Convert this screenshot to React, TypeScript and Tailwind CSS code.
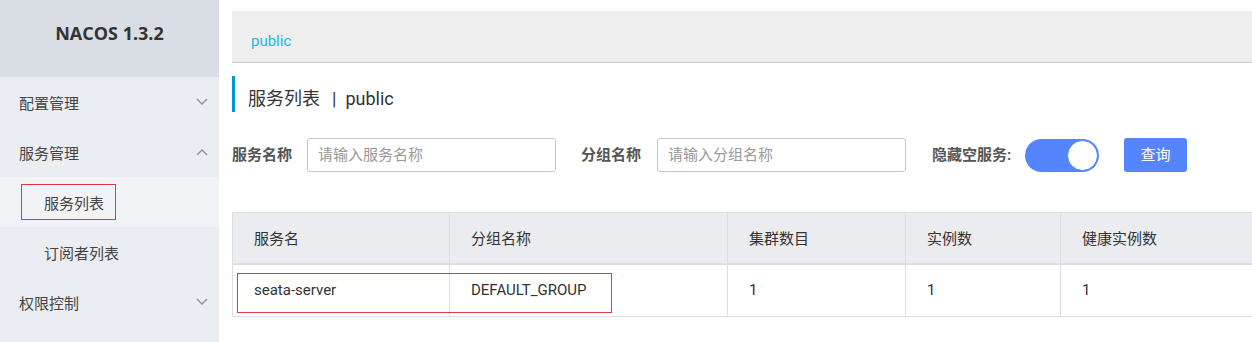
const font = { fontFamily: 'Roboto, "Noto Sans CJK SC", sans-serif' }

function Chevron({ up }: { up?: boolean }) {
  return (
    <svg width="12" height="8" viewBox="0 0 12 8" className="text-[#8a8f99]">
      <polyline
        points={up ? '1,7 6,2 11,7' : '1,1 6,6 11,1'}
        fill="none"
        stroke="currentColor"
        strokeWidth="1.3"
      />
    </svg>
  )
}

function MenuItem({ label, open }: { label: string; open?: boolean }) {
  return (
    <div className="flex h-[50px] items-center justify-between pl-[19px] pr-[11px] text-[15px] text-[#444]">
      <span className="pt-[5px]">{label}</span>
      <Chevron up={open} />
    </div>
  )
}

function SubItem({ label, active }: { label: string; active?: boolean }) {
  return (
    <div
      className={`relative flex h-[50px] items-center pl-[44px] text-[15px] text-[#444] ${
        active ? 'bg-[#f2f3f7]' : ''
      }`}
    >
      <span className="pt-[5px]">{label}</span>
      {active && (
        <div className="absolute left-[21px] top-[7px] h-[36px] w-[95px] border border-[#e4393c]" />
      )}
    </div>
  )
}

export default function App() {
  const cols = [
    { title: '服务名', value: 'seata-server', w: 'w-[217px]' },
    { title: '分组名称', value: 'DEFAULT_GROUP', w: 'w-[278px]' },
    { title: '集群数目', value: '1', w: 'w-[178px]' },
    { title: '实例数', value: '1', w: 'w-[155px]' },
    { title: '健康实例数', value: '1', w: 'w-[220px]' },
  ]

  return (
    <div className="flex h-[342px] w-[1252px] overflow-hidden bg-white" style={font}>
      {/* Sidebar */}
      <aside className="h-full w-[219px] shrink-0 bg-[#eaedf1]">
        <div
          className="flex h-[77px] items-center justify-center bg-[#d9dde4] pb-[10px] text-[18px] font-bold text-[#333]"
          style={{ fontFamily: '"Open Sans", sans-serif' }}
        >
          NACOS 1.3.2
        </div>
        <MenuItem label="配置管理" />
        <MenuItem label="服务管理" open />
        <SubItem label="服务列表" active />
        <SubItem label="订阅者列表" />
        <MenuItem label="权限控制" />
      </aside>

      {/* Main */}
      <main className="min-w-0 flex-1 overflow-hidden pl-[13px]">
        <div className="mt-[11px] h-[52px] w-[1100px] border-b border-[#cccccc] bg-[#eeeeee] pl-[19px] pt-[20px] text-[15px] leading-[20px] text-[#23b7e5]">
          public
        </div>

        <div className="mt-[13px] flex h-[36px] items-end border-l-[3px] border-[#0099cc] pb-[1px] pl-[13px] text-[18px] leading-[24px] text-[#333]">
          <span>服务列表</span>
          <span className="ml-[12px] mr-[9px]">|</span>
          <span>public</span>
        </div>

        <div className="mt-[26px] flex h-[34px] items-center text-[15px]">
          <span className="w-[75px] font-bold text-[#555]">服务名称</span>
          <div className="flex h-[34px] w-[249px] items-center rounded-[3px] border border-[#c4c6cf] pl-[10px] text-[#999]">
            请输入服务名称
          </div>
          <span className="ml-[25px] w-[76px] font-bold text-[#555]">分组名称</span>
          <div className="flex h-[34px] w-[249px] items-center rounded-[3px] border border-[#c4c6cf] pl-[10px] text-[#999]">
            请输入分组名称
          </div>
          <span className="ml-[26px] w-[93px] font-bold text-[#555]">隐藏空服务:</span>
          <div className="flex h-[33px] w-[74px] items-center justify-end rounded-full bg-[#5584ff] pr-[1px]">
            <div className="h-[31px] w-[31px] rounded-full border border-[#5584ff] bg-white" />
          </div>
          <button className="ml-[25px] h-[34px] w-[63px] rounded-[3px] bg-[#5584ff] text-[15px] text-white">
            查询
          </button>
        </div>

        <div className="relative mt-[40px] w-[1060px]">
          <div className="flex h-[53px] border-t border-b-2 border-[#dcdee3] bg-[#ebecf0] text-[15px] text-[#333]">
            {cols.map((c) => (
              <div key={c.title} className={`${c.w} flex items-center border-l border-[#dcdee3] pl-[21px] pt-[2px]`}>
                {c.title}
              </div>
            ))}
          </div>
          <div className="flex h-[52px] border-b border-[#dcdee3] text-[15px] text-[#333]">
            {cols.map((c) => (
              <div key={c.title} className={`${c.w} flex items-center border-l border-[#dcdee3] pl-[21px]`}>
                {c.value}
              </div>
            ))}
          </div>
          <div className="absolute left-[5px] top-[61px] h-[40px] w-[375px] border border-[#e4393c]" />
        </div>
      </main>
    </div>
  )
}
